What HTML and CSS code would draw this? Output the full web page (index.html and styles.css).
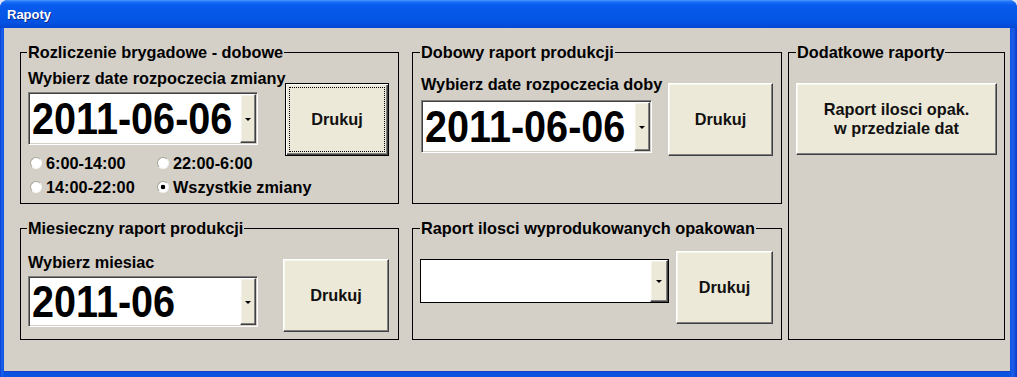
FILE: index.html
```html
<!DOCTYPE html>
<html lang="pl">
<head>
    <meta charset="UTF-8">
    <meta name="viewport" content="width=device-width, initial-scale=1.0">
    <title>Rapoty</title>
    <link rel="stylesheet" href="styles.css">
</head>
<body>
    <div class="window">
        <div class="titlebar">Rapoty</div>
        <div class="client">
            <fieldset class="group g-shift">
                <legend>Rozliczenie brygadowe - dobowe</legend>
                <div class="row">
                    <div class="col col-shift">
                        <div class="field-label">Wybierz date rozpoczecia zmiany</div>
                        <div class="combo combo-big">
                            <span class="combo-value"><span>2011-06-06</span></span>
                            <span class="combo-arrow"></span>
                        </div>
                        <div class="shifts">
                            <label class="radio"><span class="dot"></span>6:00-14:00</label>
                            <label class="radio"><span class="dot"></span>22:00-6:00</label>
                            <label class="radio"><span class="dot"></span>14:00-22:00</label>
                            <label class="radio"><span class="dot checked"></span>Wszystkie zmiany</label>
                        </div>
                    </div>
                    <button type="button" class="btn btn-default btn-shift">Drukuj</button>
                </div>
            </fieldset>

            <fieldset class="group g-day col2">
                <legend>Dobowy raport produkcji</legend>
                <div class="row">
                    <div class="col col-day">
                        <div class="field-label">Wybierz date rozpoczecia doby</div>
                        <div class="combo combo-big combo-day">
                            <span class="combo-value"><span>2011-06-06</span></span>
                            <span class="combo-arrow"></span>
                        </div>
                    </div>
                    <button type="button" class="btn btn-day">Drukuj</button>
                </div>
            </fieldset>

            <fieldset class="group g-extra col2">
                <legend>Dodatkowe raporty</legend>
                <button type="button" class="btn btn-extra">Raport ilosci opak.<br>w przedziale dat</button>
            </fieldset>

            <fieldset class="group g-month">
                <legend>Miesieczny raport produkcji</legend>
                <div class="row">
                    <div class="col col-month">
                        <div class="field-label">Wybierz miesiac</div>
                        <div class="combo combo-big combo-month">
                            <span class="combo-value"><span>2011-06</span></span>
                            <span class="combo-arrow"></span>
                        </div>
                    </div>
                    <button type="button" class="btn btn-month">Drukuj</button>
                </div>
            </fieldset>

            <fieldset class="group g-packs col2">
                <legend>Raport ilosci wyprodukowanych opakowan</legend>
                <div class="row">
                    <div class="combo combo-plain">
                        <span class="combo-value"></span>
                        <span class="combo-arrow"></span>
                    </div>
                    <button type="button" class="btn btn-packs">Drukuj</button>
                </div>
            </fieldset>
        </div>
    </div>
</body>
</html>
```

FILE: styles.css
```css
html {
    background: #dce6f6;
}
body {
    margin: 0;
    padding: 0;
    font-family: "Liberation Sans", Arial, sans-serif;
    color: #000;
}
.window {
    width: 1017px;
    height: 377px;
    box-sizing: border-box;
    padding: 0 7px 6px 4px;
    background: linear-gradient(to right, #0a3fd0 0, #1c63ef 2px, #0a52e0 4px, #0a52e0 calc(100% - 7px), #1a5fe9 calc(100% - 4px), #0a3ac8 100%);
    border-radius: 8px 8px 0 0;
    display: flex;
    flex-direction: column;
}
.titlebar {
    height: 28px;
    margin: 0 -7px 0 -4px;
    padding-left: 7px;
    border-radius: 8px 8px 0 0;
    background: linear-gradient(#4a9bff 0, #1a6ef6 2px, #075ced 5px, #0558e8 50%, #0453e2 80%, #0347d4 100%);
    color: #fff;
    font-size: 13px;
    font-weight: bold;
    line-height: 30px;
    text-shadow: 1px 1px #0b2a8c;
}
.client {
    flex: 1;
    background: #d4d0c8;
    box-sizing: border-box;
    padding: 16px 0 0 16px;
    display: grid;
    grid-template-columns: 379px 13px 370px 6px 217px;
    grid-template-rows: 160px 16px 120px;
    box-shadow: 0 1px #1640c8;
}
.group {
    margin: 0;
    padding: 0 8px 0 7px;
    border: 1px solid #000;
    min-width: 0;
    box-sizing: border-box;
}
.group.col2 { padding-left: 8px; }
.group legend {
    margin-left: -1px;
    padding: 0 1px;
    font-size: 16.3px;
    font-weight: bold;
    line-height: 17px;
}
.g-shift { grid-column: 1; grid-row: 1; }
.g-day { grid-column: 3; grid-row: 1; }
.g-extra { grid-column: 5; grid-row: 1 / 4; }
.g-month { grid-column: 1; grid-row: 3; }
.g-packs { grid-column: 3; grid-row: 3; }

.row {
    display: flex;
    align-items: flex-start;
}
.col {
    display: flex;
    flex-direction: column;
}
.field-label {
    font-size: 16.3px;
    font-weight: bold;
    line-height: 18px;
    white-space: nowrap;
}

/* combo boxes */
.combo {
    display: flex;
    box-sizing: border-box;
    background: #fff;
    border: 1px solid;
    border-color: #808080 #fff #fff #808080;
    padding: 1px;
    box-shadow: inset 1px 1px #404040, inset -1px -1px #d4d0c8;
}
.combo-value {
    flex: 1;
    min-width: 0;
    display: flex;
    align-items: center;
    padding-left: 2px;
    font-size: 45px;
    font-weight: bold;
    line-height: 1;
    white-space: nowrap;
}
.combo-value span {
    display: inline-block;
    transform: scaleX(.88);
    transform-origin: left center;
}
.combo-arrow {
    flex: none;
    width: 16px;
    box-sizing: border-box;
    background: #ece9d8;
    border: 1px solid;
    border-color: #fff #404040 #404040 #fff;
    box-shadow: inset -1px -1px #808080, inset 1px 1px #f4f2e8;
    display: flex;
    align-items: center;
    justify-content: center;
}
.combo-arrow::before {
    content: "";
    border-left: 3px solid transparent;
    border-right: 3px solid transparent;
    border-top: 3px solid #000;
    margin-top: 1px;
}
.combo-big {
    width: 230px;
    height: 53px;
}
.combo-day { width: 231px; }
.combo-month { height: 51px; }
.combo-plain {
    width: 249px;
    height: 44px;
    margin: 22px 0 0 -1px;
    border: 1px solid #000;
    padding: 0;
    box-shadow: none;
}
.combo-plain .combo-arrow { width: 18px; }

/* radios */
.shifts {
    display: grid;
    grid-template-columns: 127px auto;
    grid-auto-rows: 24px;
    margin-top: 6px;
}
.radio {
    display: flex;
    align-items: center;
    font-size: 16.3px;
    font-weight: bold;
    white-space: nowrap;
}
.dot {
    width: 12px;
    height: 12px;
    box-sizing: border-box;
    border-radius: 50%;
    border: 1px solid;
    border-color: #a8a59c #f6f6f2 #f6f6f2 #a8a59c;
    background: #fff;
    margin: 0 4px 0 2px;
}
.dot.checked {
    background: radial-gradient(circle, #000 0 2px, #fff 2.6px);
}

/* buttons */
.btn {
    box-sizing: border-box;
    height: 73px;
    padding: 0;
    background: #ece9d8;
    border: 1px solid;
    border-color: #fff #404040 #404040 #fff;
    box-shadow: inset -1px -1px #808080, inset 1px 1px #f7f6ef;
    font-family: "Liberation Sans", Arial, sans-serif;
    font-size: 16.3px;
    font-weight: bold;
    line-height: 19px;
    color: #111;
    cursor: pointer;
}
.btn-default {
    position: relative;
    border: 1px solid #000;
    box-shadow: inset 1px 1px #fff, inset -1px -1px #404040, inset -2px -2px #808080;
}
.btn-default::after {
    content: "";
    position: absolute;
    inset: 3px;
    border: 1px dotted #000;
}
.col-shift { width: 257px; margin-top: 8px; }
.col-shift .combo { margin-top: 5px; }
.btn-shift { width: 104px; margin-top: 22px; }

.col-day { width: 247px; margin-top: 14px; }
.col-day .combo { margin-top: 7px; }
.btn-day { width: 105px; margin-top: 22px; }

.col-month { width: 255px; margin-top: 16px; }
.col-month .combo { margin-top: 5px; }
.btn-month { width: 106px; margin-top: 22px; }

.btn-packs { width: 97px; margin: 14px 0 0 7px; }

.btn-extra {
    display: block;
    width: 201px;
    height: 72px;
    margin: 22px 0 0 -1px;
}
```
